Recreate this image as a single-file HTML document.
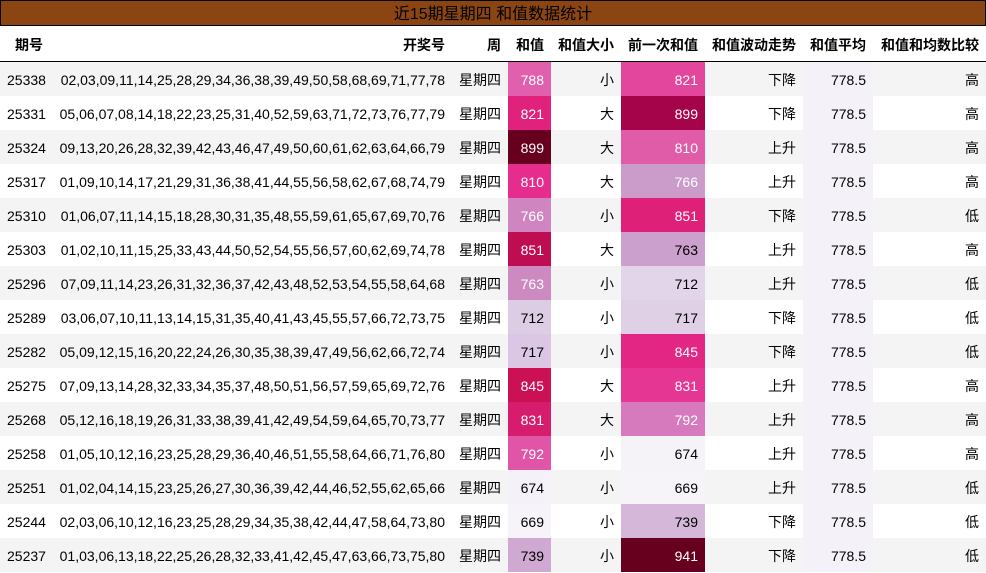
<!DOCTYPE html>
<html><head><meta charset="utf-8"><style>
body{margin:0;background:#fff;width:986px;height:573px;overflow:hidden;font-family:"Liberation Sans","Noto Sans CJK SC",sans-serif;color:#000}
.t{height:24px;background:#8b4513;border:1px solid #000;text-align:center;font-size:16px;line-height:27px;color:#000}
table{border-collapse:collapse;table-layout:fixed;width:986px;font-size:14px}
td,th{padding:0 7px;text-align:right;white-space:nowrap;overflow:hidden}
th{height:33px;border-bottom:1px solid #000;font-weight:bold;font-size:14px;padding-top:2px}
td{height:32px;padding-top:2px}
tr.g td{background:#f4f4f4}
td.a{background:#f4f2f8!important}
.w{color:#fff}
</style></head><body>
<div class="t">近15期星期四 和值数据统计</div>
<table>
<colgroup><col style="width:50px"><col style="width:402px"><col style="width:56px"><col style="width:43px"><col style="width:70px"><col style="width:84px"><col style="width:98px"><col style="width:70px"><col style="width:113px"></colgroup>
<tr><th>期号</th><th>开奖号</th><th>周</th><th>和值</th><th>和值大小</th><th>前一次和值</th><th>和值波动走势</th><th>和值平均</th><th>和值和均数比较</th></tr>
<tr class="g"><td>25338</td><td>02,03,09,11,14,25,28,29,34,36,38,39,49,50,58,68,69,71,77,78</td><td>星期四</td><td class="w" style="background:#e060ad">788</td><td>小</td><td class="w" style="background:#e3479d">821</td><td>下降</td><td class="a">778.5</td><td>高</td></tr>
<tr><td>25331</td><td>05,06,07,08,14,18,22,23,25,31,40,52,59,63,71,72,73,76,77,79</td><td>星期四</td><td class="w" style="background:#e0227c">821</td><td>大</td><td class="w" style="background:#a6044a">899</td><td>下降</td><td class="a">778.5</td><td>高</td></tr>
<tr class="g"><td>25324</td><td>09,13,20,26,28,32,39,42,43,46,47,49,50,60,61,62,63,64,66,79</td><td>星期四</td><td class="w" style="background:#67001f">899</td><td>大</td><td class="w" style="background:#e05ca8">810</td><td>上升</td><td class="a">778.5</td><td>高</td></tr>
<tr><td>25317</td><td>01,09,10,14,17,21,29,31,36,38,41,44,55,56,58,62,67,68,74,79</td><td>星期四</td><td class="w" style="background:#e62d8d">810</td><td>大</td><td class="w" style="background:#cb9bc9">766</td><td>上升</td><td class="a">778.5</td><td>高</td></tr>
<tr class="g"><td>25310</td><td>01,06,07,11,14,15,18,28,30,31,35,48,55,59,61,65,67,69,70,76</td><td>星期四</td><td class="w" style="background:#cf86c0">766</td><td>小</td><td class="w" style="background:#de2078">851</td><td>下降</td><td class="a">778.5</td><td>低</td></tr>
<tr><td>25303</td><td>01,02,10,11,15,25,33,43,44,50,52,54,55,56,57,60,62,69,74,78</td><td>星期四</td><td class="w" style="background:#bf0d51">851</td><td>大</td><td style="background:#cca0cc">763</td><td>上升</td><td class="a">778.5</td><td>高</td></tr>
<tr class="g"><td>25296</td><td>07,09,11,14,23,26,31,32,36,37,42,43,48,52,53,54,55,58,64,68</td><td>星期四</td><td class="w" style="background:#cd8ac1">763</td><td>小</td><td style="background:#e2d5ea">712</td><td>上升</td><td class="a">778.5</td><td>低</td></tr>
<tr><td>25289</td><td>03,06,07,10,11,13,14,15,31,35,40,41,43,45,55,57,66,72,73,75</td><td>星期四</td><td style="background:#ddcde4">712</td><td>小</td><td style="background:#dfd0e6">717</td><td>下降</td><td class="a">778.5</td><td>低</td></tr>
<tr class="g"><td>25282</td><td>05,09,12,15,16,20,22,24,26,30,35,38,39,47,49,56,62,66,72,74</td><td>星期四</td><td style="background:#dbc7e3">717</td><td>小</td><td class="w" style="background:#e32684">845</td><td>下降</td><td class="a">778.5</td><td>低</td></tr>
<tr><td>25275</td><td>07,09,13,14,28,32,33,34,35,37,48,50,51,56,57,59,65,69,72,76</td><td>星期四</td><td class="w" style="background:#cb1154">845</td><td>大</td><td class="w" style="background:#e53693">831</td><td>上升</td><td class="a">778.5</td><td>高</td></tr>
<tr class="g"><td>25268</td><td>05,12,16,18,19,26,31,33,38,39,41,42,49,54,59,64,65,70,73,77</td><td>星期四</td><td class="w" style="background:#d61c6c">831</td><td>大</td><td class="w" style="background:#d77abd">792</td><td>上升</td><td class="a">778.5</td><td>高</td></tr>
<tr><td>25258</td><td>01,05,10,12,16,23,25,28,29,36,40,46,51,55,58,64,66,71,76,80</td><td>星期四</td><td class="w" style="background:#e155a6">792</td><td>小</td><td style="background:#f5f2f8">674</td><td>上升</td><td class="a">778.5</td><td>高</td></tr>
<tr class="g"><td>25251</td><td>01,02,04,14,15,23,25,26,27,30,36,39,42,44,46,52,55,62,65,66</td><td>星期四</td><td style="background:#f5f1f8">674</td><td>小</td><td style="background:#f7f4f9">669</td><td>上升</td><td class="a">778.5</td><td>低</td></tr>
<tr><td>25244</td><td>02,03,06,10,12,16,23,25,28,29,34,35,38,42,44,47,58,64,73,80</td><td>星期四</td><td style="background:#f7f4f9">669</td><td>小</td><td style="background:#d4b7d9">739</td><td>下降</td><td class="a">778.5</td><td>低</td></tr>
<tr class="g"><td>25237</td><td>01,03,06,13,18,22,25,26,28,32,33,41,42,45,47,63,66,73,75,80</td><td>星期四</td><td style="background:#d0a9d2">739</td><td>小</td><td class="w" style="background:#67001f">941</td><td>下降</td><td class="a">778.5</td><td>低</td></tr>
</table>
</body></html>
